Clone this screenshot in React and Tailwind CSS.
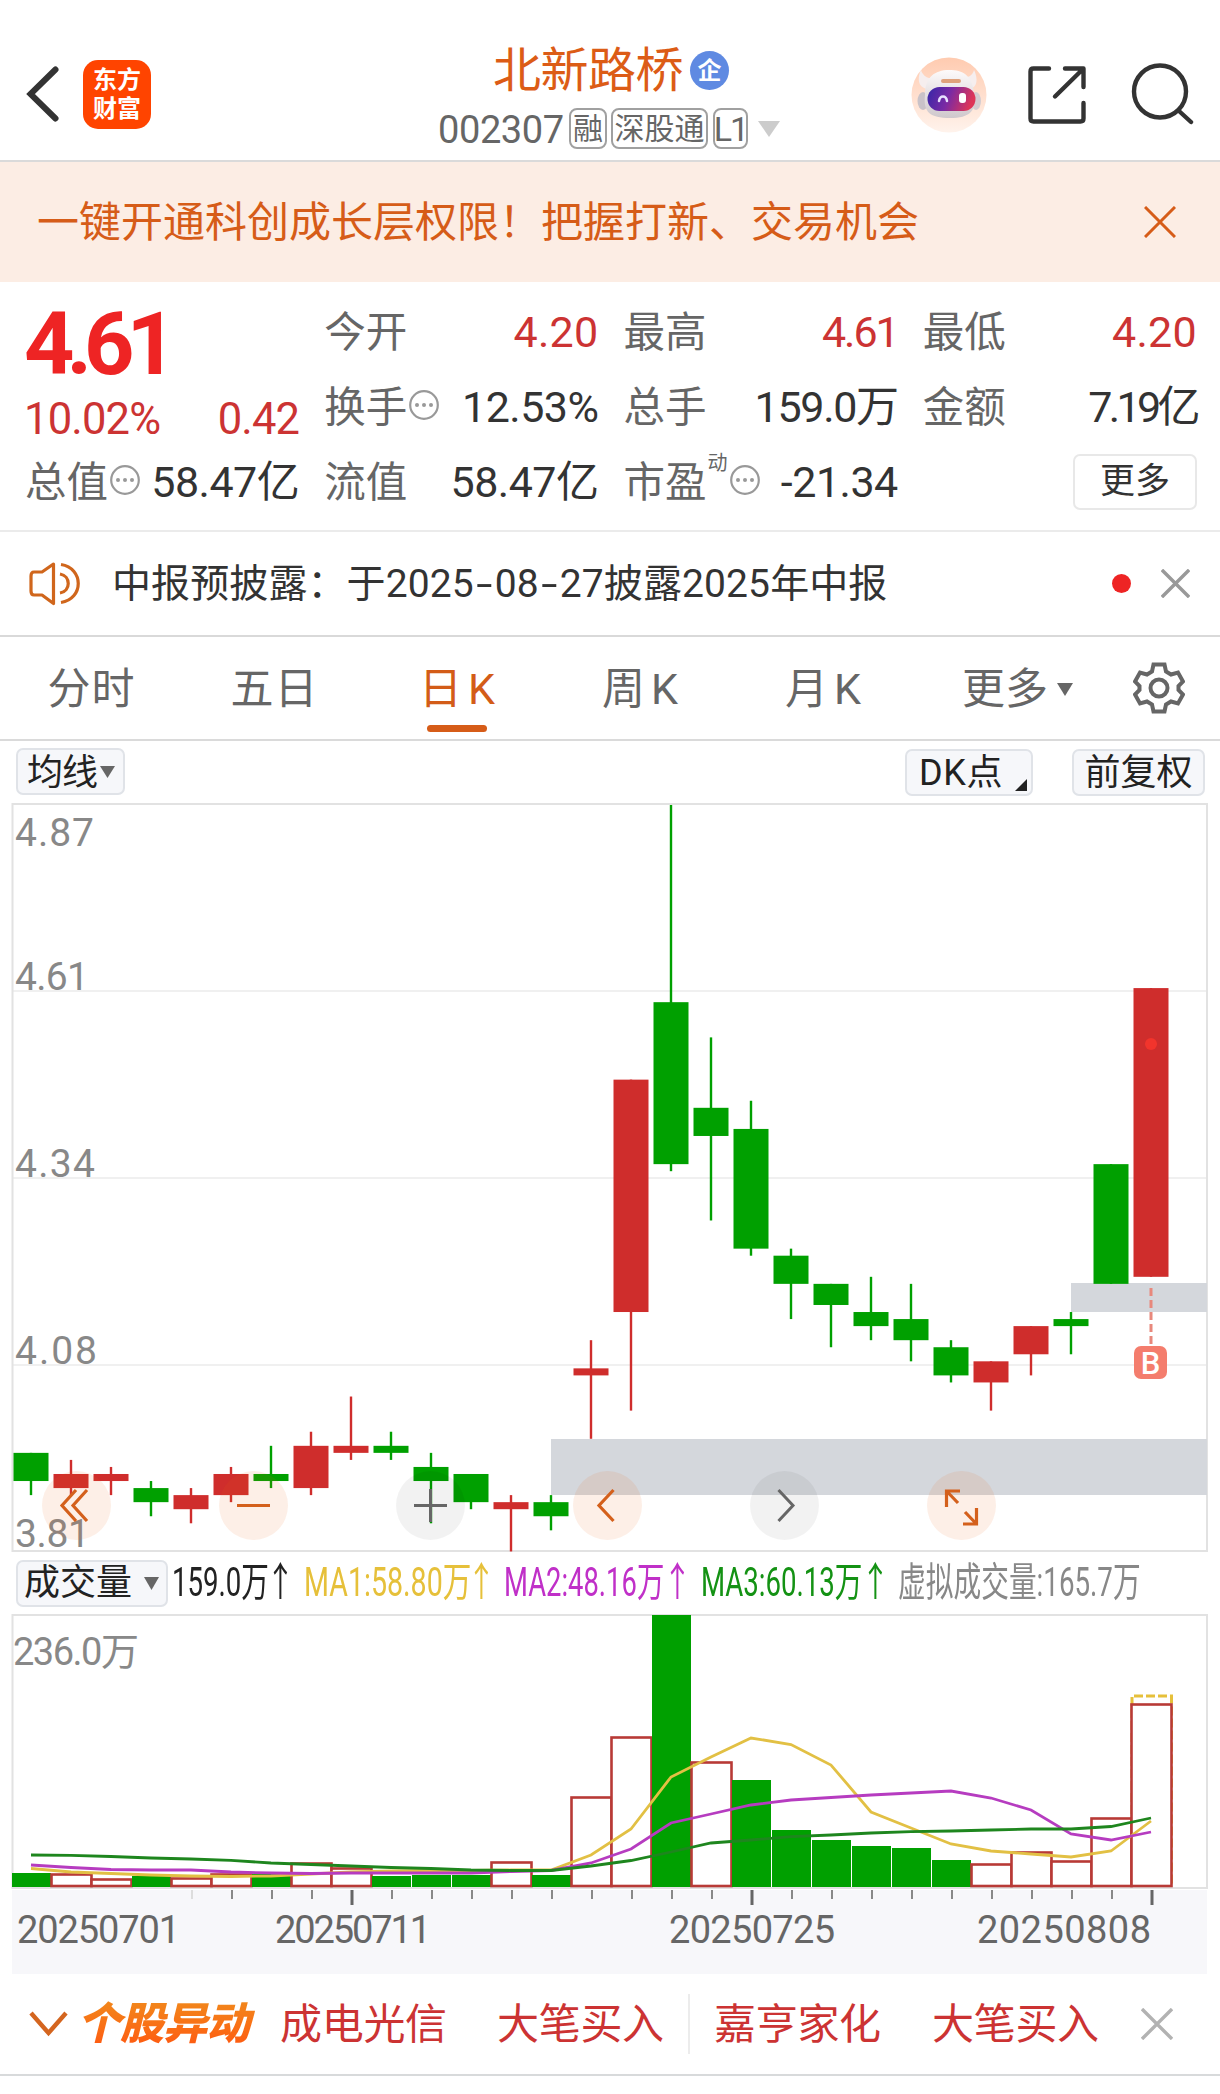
import React from 'react';

const UP = '#cf2d2c';
const DOWN = '#00a000';

// [body top, body bottom, high, low, color]
const candles = [
  [3.95, 3.91, 3.95, 3.89, DOWN],
  [3.92, 3.9, 3.94, 3.89, UP],
  [3.92, 3.91, 3.93, 3.89, UP],
  [3.9, 3.88, 3.91, 3.86, DOWN],
  [3.89, 3.87, 3.9, 3.85, UP],
  [3.92, 3.89, 3.93, 3.88, UP],
  [3.92, 3.91, 3.96, 3.9, DOWN],
  [3.96, 3.9, 3.98, 3.89, UP],
  [3.96, 3.95, 4.03, 3.94, UP],
  [3.96, 3.95, 3.98, 3.94, DOWN],
  [3.93, 3.91, 3.95, 3.85, DOWN],
  [3.92, 3.88, 3.92, 3.87, DOWN],
  [3.88, 3.87, 3.89, 3.81, UP],
  [3.88, 3.86, 3.89, 3.84, DOWN],
  [4.07, 4.06, 4.11, 3.97, UP],
  [4.48, 4.15, 4.48, 4.01, UP],
  [4.59, 4.36, 4.87, 4.35, DOWN],
  [4.44, 4.4, 4.54, 4.28, DOWN],
  [4.41, 4.24, 4.45, 4.23, DOWN],
  [4.23, 4.19, 4.24, 4.14, DOWN],
  [4.19, 4.16, 4.19, 4.1, DOWN],
  [4.15, 4.13, 4.2, 4.11, DOWN],
  [4.14, 4.11, 4.19, 4.08, DOWN],
  [4.1, 4.06, 4.11, 4.05, DOWN],
  [4.08, 4.05, 4.08, 4.01, UP],
  [4.13, 4.09, 4.13, 4.06, UP],
  [4.14, 4.13, 4.15, 4.09, DOWN],
  [4.36, 4.19, 4.36, 4.19, DOWN],
  [4.61, 4.2, 4.61, 4.2, UP],
];

// Bar tops, measured from the top of the volume panel
const volumes = [
  259, 260, 265, 262, 264, 260, 260, 249, 254, 262, 261, 261, 248, 261, 183,
  123, 1, 148, 166, 216, 226, 232, 234, 246, 250, 238, 247, 204, 90,
];
const hollowBars = [1, 2, 4, 5, 7, 8, 12, 14, 15, 17, 24, 25, 26, 27, 28];

const ma1 = [
  254.5, 258, 259.5, 261, 262, 262.5, 262, 260, 258, 257, 256.5, 256.5, 256,
  256, 241, 215, 163, 143, 124, 130.5, 151, 198, 214, 230, 237, 240, 243, 237,
  207,
];
const ma2 = [
  251, 253.5, 255.5, 256, 256, 258, 259, 259.5, 259, 259, 259, 259, 257.5,
  256.5, 249, 235, 209, 200, 191, 186, 183.5, 181, 179, 177, 184, 196, 220,
  226, 218,
];
const ma3 = [
  241, 241.3, 242.5, 244, 245, 246.3, 249, 250.5, 252, 253.5, 254.5, 256,
  256.5, 256.5, 252, 246.5, 238, 229, 226, 222.7, 221, 219, 217.7, 217, 216,
  215, 215, 212.5, 204,
];

const cx = (i) => 31 + i * 40;
const py = (p) => 1 + (4.87 - p) * 704.2;
const toPoints = (arr) => arr.map((v, i) => `${cx(i)},${v}`).join(' ');

const CloseIcon = ({ className, size = 32, width = 3 }) => (
  <svg className={className} width={size} height={size} viewBox="0 0 32 32">
    <path d="M1 1L31 31M31 1L1 31" stroke="currentColor" strokeWidth={width} fill="none" />
  </svg>
);

const InfoDots = () => (
  <svg className="shrink-0 ml-[2px] -mt-[4px]" width="30" height="32" viewBox="0 0 30 32">
    <circle cx="15" cy="15" r="13.8" fill="none" stroke="#999" strokeWidth="2.2" />
    <circle cx="8" cy="15" r="2" fill="#999" />
    <circle cx="15" cy="15" r="2" fill="#999" />
    <circle cx="22" cy="15" r="2" fill="#999" />
  </svg>
);

const Tag = ({ children, className }) => (
  <span
    className={`h-[41px] rounded-[8px] border-2 border-[#a0a0a0] flex items-center justify-center text-[30px] leading-none text-[#666] ${className}`}
  >
    {children}
  </span>
);

const Avatar = () => (
  <svg width="76" height="76" viewBox="0 0 76 76">
    <defs>
      <linearGradient id="avatarBg" x1="0" y1="0" x2="0" y2="1">
        <stop offset="0" stopColor="#ffcbb0" />
        <stop offset="1" stopColor="#fff3ec" />
      </linearGradient>
      <linearGradient id="visor" x1="0" y1="0" x2="1" y2="0.2">
        <stop offset="0" stopColor="#3527a8" />
        <stop offset="0.5" stopColor="#7a2aa4" />
        <stop offset="1" stopColor="#dd3558" />
      </linearGradient>
      <linearGradient id="helmet" x1="0" y1="0" x2="0" y2="1">
        <stop offset="0" stopColor="#fdfafa" />
        <stop offset="1" stopColor="#cfc8cc" />
      </linearGradient>
    </defs>
    <circle cx="38" cy="38" r="37.5" fill="url(#avatarBg)" />
    <path d="M10 13C6 21 7 31 17 32L26 22C18 22 12 20 10 13Z" fill="#f6eeee" />
    <path d="M63 13C67 21 67 31 58 32L49 20C56 21 61 20 63 13Z" fill="#f6eeee" />
    <ellipse cx="12" cy="44" rx="5.500" ry="9" fill="#c9c2c8" />
    <ellipse cx="65" cy="44" rx="5" ry="9" fill="#d3ccd1" />
    <path d="M14 38C14 20 24 13 38 13S61 18 63 36C66 54 59 61 39 61S12 55 14 38Z" fill="url(#helmet)" />
    <rect x="16.500" y="30" width="48" height="24" rx="12" fill="url(#visor)" />
    <rect x="30" y="22" width="20" height="4" rx="2" fill="#dfa27c" />
    <path d="M28 44C29 38 35 38 36 44" stroke="#e8e0ff" strokeWidth="2.5" fill="none" strokeLinecap="round" />
    <rect x="48" y="36" width="7" height="10" rx="3" fill="#fff" />
  </svg>
);

const Header = () => (
  <header className="h-[162px] border-b-2 border-[#dadada] flex items-start">
    <svg className="mt-[65px] ml-[26px]" width="34" height="58" viewBox="0 0 34 58">
      <path d="M29.5 4.5L4.5 29L29.5 53.5" fill="none" stroke="#333" strokeWidth="6" strokeLinecap="round" />
    </svg>
    <div className="mt-[60px] ml-[23px] w-[68px] h-[69px] rounded-[15px] bg-[#ff4400] text-white font-bold text-[24px] leading-[29px] flex flex-col items-center justify-center">
      <span>东方</span>
      <span>财富</span>
    </div>
    <div className="ml-[287px] w-[342px] flex flex-col items-start">
      <div className="mt-[43px] ml-[55px] h-[56px] flex items-center text-[#dc5c16]">
        <span className="w-[196px] whitespace-nowrap text-[48px] leading-[56px] tracking-[-0.5px]">北新路桥</span>
        <span className="-mt-[1px] ml-[1px] w-[39px] h-[39px] rounded-full bg-[#5f8ae2] text-white text-[24px] font-bold leading-none flex items-center justify-center">企</span>
      </div>
      <div className="mt-[9px] h-[41px] flex items-center">
        <span className="pt-[3px] w-[131px] text-[38px] leading-[41px] tracking-[-0.4px] text-[#666]">002307</span>
        <Tag className="w-[38px] pt-[1px]">融</Tag>
        <Tag className="w-[97px] ml-[4px] pt-[1px]">深股通</Tag>
        <Tag className="w-[35px] ml-[5px] !text-[34px]">
          <span className="tracking-[-2px]">L1</span>
        </Tag>
        <svg className="ml-[10px]" width="22" height="16" viewBox="0 0 22 16">
          <path d="M0 0H22L11 16Z" fill="#ccc" />
        </svg>
      </div>
    </div>
    <div className="mt-[57px] ml-[131px] flex text-[#333]">
      <Avatar />
      <svg className="ml-[41px] mt-[9px]" width="58" height="58" viewBox="0 0 58 58">
        <g fill="none" stroke="currentColor" strokeWidth="4.4" strokeLinecap="round" strokeLinejoin="round">
          <path d="M21 2.5H5.5Q2.5 2.5 2.5 5.5V52.5Q2.5 55.5 5.5 55.5H52.5Q55.5 55.5 55.5 52.5V37" />
          <path d="M37 2.5H55.5V21M54 4L27 30.5" />
        </g>
      </svg>
      <svg className="ml-[45px] mt-[6px]" width="64" height="62" viewBox="0 0 64 62">
        <g fill="none" stroke="currentColor" strokeWidth="4.4" strokeLinecap="round">
          <circle cx="29" cy="28.5" r="26" />
          <path d="M48 48L60 59" />
        </g>
      </svg>
    </div>
  </header>
);

const Banner = () => (
  <div className="h-[120px] bg-[#fcede4] text-[#d65c18] flex items-center justify-between pl-[37px] pr-[44px]">
    <span className="pt-[2px] text-[42px] leading-none">一键开通科创成长层权限！把握打新、交易机会</span>
    <CloseIcon />
  </div>
);

const Row = ({ label, info, sup, value, color = 'text-[#333]', tracking = 'tracking-[-0.5px]' }) => (
  <div className="h-[75px] flex items-center">
    <span className="text-[41.5px] leading-none text-[#666] shrink-0">{label}</span>
    {sup && <span className="self-start mt-[8px] text-[20px] leading-[20px] text-[#666] ml-[1px]">{sup}</span>}
    {info && <InfoDots />}
    <span className={`ml-auto -mr-[2px] text-[43px] leading-none whitespace-nowrap ${color} ${tracking}`}>{value}</span>
  </div>
);

const Quote = () => (
  <section className="h-[250px] border-b-2 border-[#ebebeb] px-[25px] pt-[13px] grid grid-cols-4 gap-x-[27px]">
    <div>
      <div className="h-[98px] -ml-[1px] text-[#ee2424] text-[88px] font-bold leading-[98px] tracking-[-8px]">4.61</div>
      <div className="h-[52px] pt-[1px] -ml-[1px] -mr-[2px] flex items-center justify-between text-[43.5px] leading-none text-[#cc3333] tracking-[-0.8px]">
        <span>10.02%</span>
        <span>0.42</span>
      </div>
      <Row label="总值" info value="58.47亿" />
    </div>
    <div>
      <Row label="今开" value="4.20" color="text-[#cc3333]" tracking="tracking-[0.3px]" />
      <Row label="换手" info value="12.53%" />
      <Row label="流值" value="58.47亿" />
    </div>
    <div>
      <Row label="最高" value="4.61" color="text-[#cc3333]" tracking="tracking-[-2px]" />
      <Row label="总手" value="159.0万" tracking="tracking-[-1.3px]" />
      <Row label="市盈" sup="动" info value="-21.34" />
    </div>
    <div>
      <Row label="最低" value="4.20" color="text-[#cc3333]" tracking="tracking-[0.3px]" />
      <Row label="金额" value="7.19亿" tracking="tracking-[-3.6px]" />
      <div className="h-[75px] flex items-center justify-end">
        <button className="-mr-[2px] -mt-[2px] w-[124px] h-[56px] rounded-[7px] border-2 border-[#e8e8e8] text-[35px] leading-none text-[#333]">更多</button>
      </div>
    </div>
  </section>
);

const Dash = () => <span className="inline-block w-[21px] text-center scale-x-[1.5]">-</span>;

const Notice = () => (
  <section className="h-[105px] border-b-2 border-[#d9d9d9] flex items-center">
    <svg className="ml-[29px]" width="52" height="44" viewBox="0 0 52 44">
      <g fill="none" stroke="#d0661c" strokeWidth="3.2" strokeLinejoin="round">
        <path d="M24.5 2L13 10H5Q2 10 2 14V29Q2 33 5 33H13L24.5 41.5Z" />
        <path d="M31 12C42 14 42 29 31 31" />
        <path d="M32 2.5C55 6 55 37 32 40.5" />
      </g>
    </svg>
    <span className="ml-[31px] pt-[2px] text-[39px] leading-none tracking-[0.1px] text-[#333] whitespace-nowrap">
      中报预披露：于2025<Dash />08<Dash />27披露2025年中报
    </span>
    <span className="ml-auto w-[19px] h-[19px] rounded-full bg-[#ee2424]"></span>
    <CloseIcon className="ml-[30px] mr-[30px] text-[#999]" size={29} width={3.8} />
  </section>
);

const tabs = ['分时', '五日', '日K', '周K', '月K'];

const Tabs = () => (
  <nav className="h-[104px] border-b-2 border-[#dadada] flex text-[43px] leading-none text-[#666]">
    {tabs.map((tab) => (
      <div
        key={tab}
        className={`relative w-[183px] pt-[2px] flex items-center justify-center ${
          tab.endsWith('K') ? 'tracking-[6px] pl-[5px]' : 'tracking-[1px]'
        } ${tab === '日K' ? 'text-[#d35c18]' : ''}`}
      >
        {tab}
        {tab === '日K' && <span className="absolute bottom-[7px] left-[61px] w-[60px] h-[7px] rounded-full bg-[#d65c18]"></span>}
      </div>
    ))}
    <div className="w-[205px] pt-[2px] flex items-center justify-center">
      更多
      <svg className="ml-[9px]" width="16" height="13" viewBox="0 0 16 13">
        <path d="M0 0H16L8 13Z" fill="#666" />
      </svg>
    </div>
    <div className="w-[77px] flex items-center justify-center">
      <svg width="52" height="52" viewBox="0 0 52 52">
        <g fill="none" stroke="#666" strokeWidth="4">
          <path d="M20.5 2.5H31.5L33 9.5L38 12.5L45 10.5L50 19.5L45.5 24V28L50 32.5L45 41.5L38 39.5L33 42.5L31.5 49.5H20.5L19 42.5L14 39.5L7 41.5L2 32.5L6.5 28V24L2 19.5L7 10.5L14 12.5L19 9.5Z" />
          <circle cx="26" cy="26" r="8.5" />
        </g>
      </svg>
    </div>
  </nav>
);

const chip = 'h-[47px] shrink-0 rounded-[7px] border-2 border-[#e0e3e8] bg-[#f6f7fa] text-[#222] text-[36px] leading-none flex items-center';

const Toolbar = () => (
  <div className="h-[63px] pt-[7px] flex items-start">
    <div className={`${chip} ml-[16px] w-[109px] pl-[9px]`}>
      <span className="tracking-[-1px] pt-[2px]">均线</span>
      <svg className="ml-[3px]" width="15" height="12" viewBox="0 0 15 12">
        <path d="M0 0H15L7.5 12Z" fill="#666" />
      </svg>
    </div>
    <div className={`${chip} ml-auto mt-[1px] w-[128px] pl-[12px]`}>
      <span className="tracking-[0.7px]">DK点</span>
      <svg className="ml-auto mr-[4px] mt-[24px]" width="12" height="12" viewBox="0 0 12 12">
        <path d="M12 0V12H0Z" fill="#222" />
      </svg>
    </div>
    <div className={`${chip} ml-[39px] mr-[15px] mt-[1px] w-[133px] justify-center`}>前复权</div>
  </div>
);

const KLine = () => (
  <svg className="block overflow-visible" width="1220" height="748" viewBox="0 0 1220 748">
    <g stroke="#ececec" strokeWidth="1.5">
      <path d="M13 187H1206M13 374H1206M13 561H1206" />
    </g>
    <rect x="12.5" y="0" width="1194.5" height="747" fill="none" stroke="#e2e2e2" strokeWidth="2" />
    <g fill="#888" fontSize="39">
      <text x="15" y="42" textLength="79">4.87</text>
      <text x="15" y="186" textLength="74">4.61</text>
      <text x="15" y="373" textLength="80">4.34</text>
      <text x="15" y="560" textLength="82">4.08</text>
    </g>
    <rect x="551" y="635" width="656" height="56" fill="#d4d7dc" />
    <rect x="1071" y="479" width="136" height="29" fill="#d4d7dc" />
    {candles.map(([top, bottom, high, low, color], i) => (
      <g key={i} fill={color}>
        <rect x={cx(i) - 1.2} y={py(high)} width="2.4" height={py(low) - py(high)} />
        <rect x={cx(i) - 17.5} y={py(top)} width="35" height={py(bottom) - py(top)} />
      </g>
    ))}
    <circle cx="1151" cy="240" r="6" fill="#f2342c" />
    <path d="M1151 484V540" stroke="#e8887c" strokeWidth="3" strokeDasharray="8 4" />
    <rect x="1134" y="542" width="33" height="33" rx="7" fill="#f47d6d" />
    <text x="1150.5" y="569.5" textAnchor="middle" fontSize="31" fontWeight="500" fill="#fff">B</text>
    <text x="15" y="743" fill="#888" fontSize="39" textLength="75">3.81</text>

    {/* Pan and zoom controls */}
    <g fill="#f06414" fillOpacity="0.1">
      <circle cx="76.5" cy="701.5" r="34.5" />
      <circle cx="253.5" cy="701.5" r="34.5" />
      <circle cx="607.5" cy="701.5" r="34.5" />
      <circle cx="961.5" cy="701.5" r="34.5" />
    </g>
    <g fill="#000" fillOpacity="0.05">
      <circle cx="430.5" cy="701.5" r="34.5" />
      <circle cx="784.5" cy="701.5" r="34.5" />
    </g>
    <g fill="none" stroke="#d4601c" strokeWidth="3.2">
      <path d="M76 686L62 701.5L76 717M87 686L73 701.5L87 717" />
      <path d="M237 701.5H270" />
      <path d="M613.5 686L599 701.5L613.5 717" />
      <path d="M946.5 703V687H960M946.5 687L958 699M976.5 704V720H963M976.5 720L965 708" />
    </g>
    <g fill="none" stroke="#666" strokeWidth="3">
      <path d="M414 701.5H447M430.5 685V718" />
      <path d="M778.5 686L793 701.5L778.5 717" />
    </g>
  </svg>
);

const indicators = [
  { text: '159.0万', box: 'w-[132px] text-[#222]', label: 'w-[94px] scale-x-[0.69]' },
  { text: 'MA1:58.80万', box: 'w-[200px] text-[#e6c03a]', label: 'w-[163px] scale-x-[0.715]' },
  { text: 'MA2:48.16万', box: 'w-[197px] text-[#c030c8]', label: 'w-[159px] scale-x-[0.685]' },
  { text: 'MA3:60.13万', box: 'w-[197px] text-[#149214]', label: 'w-[160px] scale-x-[0.69]' },
];

const VolumeHeader = () => (
  <div className="h-[62px] pl-[16px] flex items-center text-[40px] leading-none whitespace-nowrap">
    <div className={`${chip} w-[152px] pl-[6px]`}>
      <span>成交量</span>
      <svg className="ml-[12px]" width="15" height="13" viewBox="0 0 15 13">
        <path d="M0 0H15L7.5 13Z" fill="#666" />
      </svg>
    </div>
    <div className="ml-[4px] flex">
      {indicators.map(({ text, box, label }) => (
        <div key={text} className={`${box} shrink-0 flex items-center`}>
          <span className={`${label} shrink-0 origin-left`}>{text}</span>
          <span className="w-[28px] shrink-0 origin-left scale-x-[0.72]">↑</span>
        </div>
      ))}
      <span className="w-[240px] shrink-0 origin-left scale-x-[0.693] text-[#888]">虚拟成交量:165.7万</span>
    </div>
  </div>
);

const Volume = () => (
  <svg className="block" width="1220" height="360" viewBox="0 0 1220 360">
    <rect x="12" y="276" width="1195" height="84" fill="#f7f7fa" />
    <rect x="12.5" y="1" width="1194.5" height="273" fill="none" stroke="#e2e2e2" strokeWidth="2" />
    <text x="13" y="51" fill="#888" fontSize="38" textLength="126">236.0万</text>
    <path d="M1132 272V82H1171.5V272" fill="none" stroke="#e6c03a" strokeWidth="3" strokeDasharray="9 3" />
    {volumes.map((y, i) =>
      hollowBars.includes(i) ? (
        <rect key={i} x={11.5 + i * 40} y={y + 0.5} width="40" height={271.5 - y} fill="#fff" stroke="#b83a36" strokeWidth="2.6" />
      ) : (
        <rect key={i} x={12 + i * 40} y={y} width="39" height={273 - y} fill={DOWN} />
      )
    )}
    <g fill="none" strokeWidth="2.8">
      <polyline points={toPoints(ma1)} stroke="#e2c044" />
      <polyline points={toPoints(ma2)} stroke="#b63cc0" />
      <polyline points={toPoints(ma3)} stroke="#1e861e" />
    </g>
    {Array.from({ length: 25 }, (_, k) => k + 4).map((i) => {
      const major = i % 10 === 8;
      return (
        <rect
          key={i}
          x={cx(i) + (major ? -0.5 : 0)}
          y="276"
          width={major ? 3 : 2}
          height={major ? 15 : 9}
          fill={major ? '#666' : i === 4 ? '#ddd' : '#888'}
        />
      );
    })}
    <g fill="#666" fontSize="38">
      <text x="17" y="329" textLength="163">20250701</text>
      <text x="275" y="329" textLength="156">20250711</text>
      <text x="669" y="329" textLength="166">20250725</text>
      <text x="977" y="329" textLength="174">20250808</text>
    </g>
  </svg>
);

const Ticker = () => (
  <footer className="h-[102px] border-b-2 border-[#d8dadb] flex items-center text-[42px] leading-none tracking-[-0.3px] text-[#cc3333] whitespace-nowrap">
    <svg className="ml-[29px]" width="39" height="26" viewBox="0 0 39 26">
      <path d="M2 2L19.5 22L37 2" fill="none" stroke="#d4651f" strokeWidth="4.4" />
    </svg>
    <span className="ml-[9px] w-[181px] text-[44px] leading-[54px] font-black italic tracking-[-1px] bg-gradient-to-b from-[#f08a1c] to-[#ff5410] bg-clip-text text-transparent">
      个股异动
    </span>
    <span className="ml-[22px] pt-[2px] w-[217px]">成电光信</span>
    <span className="w-[191px] pt-[2px]">大笔买入</span>
    <span className="w-[26px] h-[60px] border-l-2 border-[#ececec]"></span>
    <span className="w-[218px] pt-[2px]">嘉亨家化</span>
    <span className="w-[209px] pt-[2px]">大笔买入</span>
    <CloseIcon className="text-[#b2b2b2]" width={3.4} />
  </footer>
);

const App = () => {
  return (
    <div className="w-[1220px] h-[2094px] overflow-hidden bg-white font-['Roboto','Noto_Sans_CJK_SC',sans-serif]">
      <Header />
      <Banner />
      <Quote />
      <Notice />
      <Tabs />
      <Toolbar />
      <KLine />
      <VolumeHeader />
      <Volume />
      <Ticker />
    </div>
  );
};

export default App;
